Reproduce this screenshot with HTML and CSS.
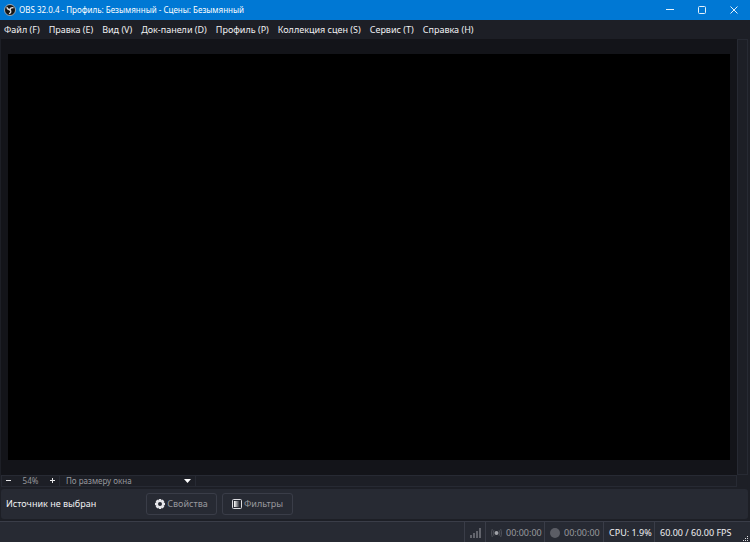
FILE: index.html
```html
<!DOCTYPE html>
<html lang="ru">
<head>
    <meta charset="UTF-8">
    <meta name="viewport" content="width=device-width, initial-scale=1.0">
    <title>OBS 32.0.4</title>
    <link rel="stylesheet" href="styles.css">
</head>
<body>
    <header class="titlebar">
        <svg class="logo" viewBox="0 0 24 24">
            <circle cx="12" cy="12" r="11" fill="#151515" stroke="#c8c8c8" stroke-width="1.5"/>
            <g fill="none" stroke="#ddd" stroke-width="2.6" stroke-linecap="round">
                <path d="M6 7c1 3.500 3.500 4.500 6 4.500"/>
                <path d="M18 7.500c-3.500-.5-6 1-6 4"/>
                <path d="M11 19c3-1.500 3.500-4.500 1-7.500"/>
            </g>
        </svg>
        <span class="title">OBS 32.0.4 - Профиль: Безымянный - Сцены: Безымянный</span>
        <div class="window-buttons">
            <button aria-label="Свернуть"><svg viewBox="0 0 8 8"><path d="M0 3.500h8"/></svg></button>
            <button aria-label="Развернуть"><svg viewBox="0 0 8 8"><rect x=".5" y=".5" width="7" height="7" rx="1"/></svg></button>
            <button aria-label="Закрыть"><svg viewBox="0 0 8 8"><path d="M.5.5l7 7M7.500.5l-7 7"/></svg></button>
        </div>
    </header>

    <nav class="menu">
        <button>Файл (F)</button>
        <button>Правка (E)</button>
        <button>Вид (V)</button>
        <button>Док-панели (D)</button>
        <button>Профиль (P)</button>
        <button>Коллекция сцен (S)</button>
        <button>Сервис (T)</button>
        <button>Справка (H)</button>
    </nav>

    <main class="workspace">
        <div class="preview">
            <div class="canvas"></div>
        </div>
        <div class="scroll-vertical"></div>
        <div class="zoombar">
            <button class="zoom-button" aria-label="Уменьшить"><svg viewBox="0 0 6 6"><path d="M0 2.500h5"/></svg></button>
            <span class="zoom-value">54%</span>
            <button class="zoom-button" aria-label="Увеличить"><svg viewBox="0 0 6 6"><path d="M0 2.500h5M2.500 0v5"/></svg></button>
            <div class="scale">
                <select class="scale-select" aria-label="Масштаб">
                    <option>По размеру окна</option>
                </select>
                <svg class="arrow" viewBox="0 0 7 4"><path d="M0 0h7L3.500 4z"/></svg>
            </div>
        </div>
    </main>

    <section class="source">
        <span class="source-name">Источник не выбран</span>
        <button class="source-button" disabled>
            <svg viewBox="0 0 20 20">
                <circle cx="10" cy="10" r="6" fill="none" stroke="#e6e6ea" stroke-width="4"/>
                <path d="M10 0v4M10 16v4M0 10h4M16 10h4M3 3l2.500 2.500M14.500 14.500L17 17M17 3l-2.500 2.500M5.500 14.500L3 17" stroke="#e6e6ea" stroke-width="5"/>
            </svg>
            Свойства
        </button>
        <button class="source-button" disabled>
            <svg viewBox="0 0 20 20">
                <defs>
                    <linearGradient id="fade">
                        <stop offset="0" stop-color="#fff"/>
                        <stop offset="1" stop-color="#272a33"/>
                    </linearGradient>
                </defs>
                <rect x="1" y="1" width="18" height="18" rx="2" fill="none" stroke="#dcdce0" stroke-width="2"/>
                <rect x="4" y="4" width="11" height="12" fill="url(#fade)"/>
            </svg>
            Фильтры
        </button>
    </section>

    <footer class="status">
        <div class="cell">
            <svg class="bars" viewBox="0 0 11 10" fill="#62646c">
                <path d="M0 7h2v3H0zM3 5h2v5H3zM6 3h2v7H6zM9 0h2v10H9z"/>
            </svg>
        </div>
        <div class="cell time">
            <svg class="stream" viewBox="0 0 11 10" fill="none" stroke="#50535b">
                <circle cx="5.500" cy="5" r="2" fill="#a0a2a8" stroke="none"/>
                <path d="M3 2.200q-1.800 2.800 0 5.600M8 2.200q1.800 2.800 0 5.600M1.300 1q-2 4 0 8M9.700 1q2 4 0 8"/>
            </svg>
            00:00:00
        </div>
        <div class="cell time">
            <span class="record"></span>
            00:00:00
        </div>
        <div class="cell cpu">CPU: 1.9%</div>
        <div class="cell fps">60.00 / 60.00 FPS</div>
        <svg class="grip" viewBox="0 0 6 6" fill="#dcdde0">
            <path d="M4 0h1v1H4zM2 2h1v1H2zM4 2h1v1H4zM0 4h1v1H0zM2 4h1v1H2zM4 4h1v1H4z"/>
        </svg>
    </footer>
</body>
</html>
```
FILE: styles.css
```css
* {
    box-sizing: border-box;
}
body {
    margin: 0;
    height: 100vh;
    display: flex;
    flex-direction: column;
    overflow: hidden;
    background: #1d1f26;
    color: #f0f0f2;
    font: 9px/14px "Noto Sans", "Open Sans", sans-serif;
}
button, select {
    margin: 0;
    padding: 0;
    border: 0;
    background: none;
    color: inherit;
    font: inherit;
}
svg {
    display: block;
    flex: none;
}
.titlebar {
    display: flex;
    align-items: center;
    height: 20px;
    padding-left: 4px;
    background: #0078d4;
    color: #fff;
    font-size: 8px;
}
.logo {
    width: 12px;
    height: 12px;
    margin-right: 3px;
}
.window-buttons {
    display: flex;
    height: 100%;
    margin-left: auto;
}
.window-buttons button {
    display: flex;
    align-items: center;
    justify-content: center;
    width: 32px;
}
.window-buttons svg {
    width: 8px;
    height: 8px;
    fill: none;
    stroke: #e4f1fb;
}
.menu {
    display: flex;
    gap: 9px;
    height: 19px;
    padding: 0 4px;
}
.workspace {
    flex: 1;
    display: grid;
    grid-template-columns: 1fr 11px;
    grid-template-rows: 1fr 12px;
    padding: 0 2px 0 1px;
}
.preview {
    display: flex;
    padding: 15px 7px;
    background: #131419;
}
.canvas {
    flex: 1;
    background: #000;
}
.scroll-vertical {
    border: 1px solid #272a33;
}
.zoombar {
    display: flex;
    align-items: center;
    border: 1px solid #272a33;
    color: #97989d;
    font-size: 8px;
    line-height: 10px;
}
.zoom-button {
    display: flex;
    align-items: center;
    justify-content: center;
    width: 13px;
    height: 10px;
}
.zoom-button svg {
    width: 6px;
    height: 6px;
    stroke: #e8e8ea;
}
.zoom-value {
    width: 31px;
    text-align: center;
}
.scale {
    position: relative;
    display: flex;
    width: 137px;
    height: 10px;
    border: 0 solid #272a33;
    border-width: 0 1px;
}
.scale-select {
    appearance: none;
    width: 100%;
    padding-left: 6px;
    line-height: 10px;
}
.arrow {
    position: absolute;
    top: 3px;
    right: 4px;
    width: 7px;
    height: 4px;
    fill: #fff;
    pointer-events: none;
}
.source {
    display: flex;
    align-items: center;
    gap: 5px;
    height: 30px;
    margin: 2px 2px 2px 1px;
    padding-left: 5px;
    border-radius: 3px;
    background: #272a33;
}
.source-name {
    width: 135px;
}
.source-button {
    display: flex;
    align-items: center;
    justify-content: center;
    gap: 2px;
    width: 71px;
    height: 22px;
    border: 1px solid #3a3d48;
    border-radius: 3px;
    color: #97989d;
}
.source-button svg {
    width: 10px;
    height: 10px;
}
.status {
    position: relative;
    display: flex;
    justify-content: flex-end;
    height: 21px;
    border-top: 1px solid #3a3d48;
    background: #272a33;
}
.cell {
    display: flex;
    align-items: center;
    gap: 4px;
    padding: 2px 0 0 5px;
    width: 21px;
    border-left: 1px solid #3a3d48;
}
.time {
    width: 59px;
    color: #97989d;
}
.bars, .stream {
    width: 11px;
    height: 10px;
}
.record {
    width: 10px;
    height: 10px;
    border-radius: 50%;
    background: #5b5d65;
}
.cpu {
    width: 51px;
}
.fps {
    width: 96px;
}
.grip {
    position: absolute;
    right: 1px;
    bottom: 0;
    width: 6px;
    height: 6px;
}
```
